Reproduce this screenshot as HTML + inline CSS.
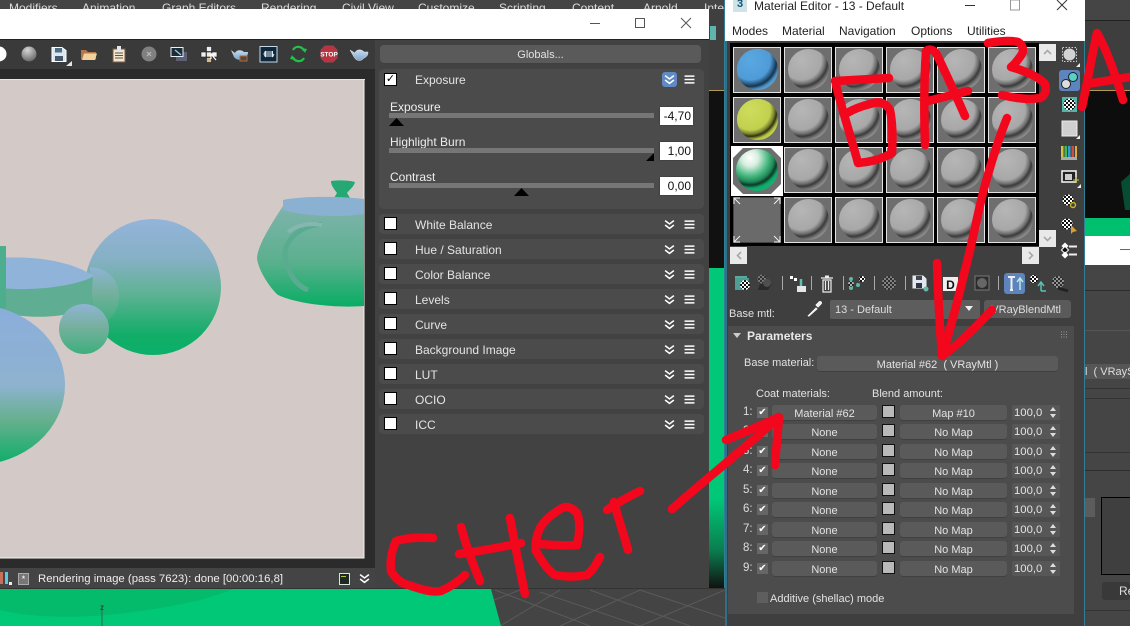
<!DOCTYPE html>
<html><head><meta charset="utf-8">
<style>
html,body{margin:0;padding:0;background:#444;}
#p{position:relative;width:1130px;height:626px;overflow:hidden;background:#444;font-family:"Liberation Sans",sans-serif;font-size:12px;color:#e6e6e6;}
#p div,#p span.a,#p svg.a{position:absolute;}
.t{white-space:nowrap;line-height:14px;}
.f{font-size:11px;}
.row{left:379px;width:325px;height:20px;background:#4b4b4b;border-radius:4px;}
.cb{left:384px;width:11px;height:11px;background:#fff;border:1px solid #000;}
.lb{left:415px;white-space:nowrap;line-height:14px;color:#e4e4e4;}
.tr{left:389px;width:265px;height:5px;background:#767676;}
.in{left:660px;width:33px;height:18px;background:#fff;color:#111;text-align:right;line-height:18px;box-shadow:0 0 1px #222;font-size:12px;padding-right:0;}
.in span{padding-right:2px;}
.s{width:46px;height:44px;background:#6e6e6e;border:1px solid #e4e4e4;overflow:hidden;}
.s:before{content:"";position:absolute;left:3px;top:1px;width:41px;height:41px;border-radius:50%;background:radial-gradient(circle 32px at 33% 27%,#b6b6b6 0,#a8a8a8 62%,#707070 74%,#3a3a3a 82%,#747474 92%,#929292 100%);}
.sb{width:17px;height:17px;background:#e9e9e9;}
.btn{background:#5a5a5a;border-radius:3px;color:#e2e2e2;text-align:center;height:15px;line-height:18px;box-shadow:0 1px 0 #404040;font-size:11px;white-space:nowrap;}
.n{left:743px;line-height:14px;color:#ddd;font-size:11.500px;}
.ck{left:757px;width:11px;height:11px;background:#666;color:#fff;font-size:10px;line-height:11px;text-align:center;}
.sw{left:882px;width:11px;height:11px;background:#b9b9b9;border:1px solid #111;}
.m1{left:772px;width:105px;}
.m2{left:900px;width:107px;}
.sp{left:1012px;width:48px;height:15px;background:#575757;border-radius:2px;line-height:16px;color:#e4e4e4;padding-left:2px;box-sizing:border-box;font-size:11.300px;}
.sp:after{content:"";position:absolute;right:4px;top:2px;width:0;height:0;border-left:3px solid transparent;border-right:3px solid transparent;border-bottom:4px solid #ddd;}
.sp:before{content:"";position:absolute;right:4px;bottom:2px;width:0;height:0;border-left:3px solid transparent;border-right:3px solid transparent;border-top:4px solid #ddd;}
</style></head><body><div id="p">

<svg width="0" height="0" style="position:absolute"><defs>
<symbol id="ch" viewBox="0 0 10 10"><path d="M1 1.500L5 4.500L9 1.500M1 5.500L5 8.500L9 5.500" fill="none" stroke="#fff" stroke-width="1.400"/></symbol>
<symbol id="hb" viewBox="0 0 11 10"><path d="M0 1.200H11M0 5H11M0 8.800H11" stroke="#fff" stroke-width="1.700"/></symbol>
</defs></svg>

<!-- top menu -->
<div style="left:0;top:0;width:725px;height:40px;background:#454545"></div>
<div class="t" style="left:9px;top:1px;color:#ddd">Modifiers</div>
<div class="t" style="left:82px;top:1px;color:#ddd">Animation</div>
<div class="t" style="left:162px;top:1px;color:#ddd">Graph Editors</div>
<div class="t" style="left:261px;top:1px;color:#ddd">Rendering</div>
<div class="t" style="left:342px;top:1px;color:#ddd">Civil View</div>
<div class="t" style="left:418px;top:1px;color:#ddd">Customize</div>
<div class="t" style="left:499px;top:1px;color:#ddd">Scripting</div>
<div class="t" style="left:572px;top:1px;color:#ddd">Content</div>
<div class="t" style="left:643px;top:1px;color:#ddd">Arnold</div>
<div class="t" style="left:704px;top:1px;color:#ddd">Inte</div>

<!-- right of frame buffer strip -->
<div style="left:709px;top:9px;width:16px;height:81px;background:#3f3f3f"></div>
<div style="left:710px;top:26px;width:6px;height:14px;background:#5fb5ad"></div>
<div style="left:709px;top:90px;width:16px;height:1px;background:#b59a55"></div>
<div style="left:709px;top:91px;width:16px;height:177px;background:#111"></div>
<div style="left:709px;top:268px;width:15px;height:320px;background:linear-gradient(#00c878 0,#00c878 72%,#0a7f50 88%,#111 100%)"></div>
<div style="left:724px;top:0;width:1px;height:626px;background:#2f7f97"></div>

<!-- VFB window -->
<div style="left:0;top:9px;width:709px;height:30px;background:#fff"></div>
<div style="left:0;top:39px;width:709px;height:1px;background:#222"></div>
<div style="left:0;top:40px;width:375px;height:29px;background:#3a3a3a"></div>
<div style="left:0;top:69px;width:375px;height:499px;background:#2b2b2b"></div>
<div style="left:375px;top:40px;width:334px;height:548px;background:#424242"></div>
<div style="left:0;top:568px;width:375px;height:20px;background:#444"></div>

<!-- window buttons -->
<svg class="a" style="left:580px;top:12px" width="125" height="22"><path d="M10 11.500H20" stroke="#555"/><rect x="55.500" y="6.500" width="9" height="9" fill="none" stroke="#555"/><path d="M101 6L111 16M111 6L101 16" stroke="#555"/></svg>

<!-- render image -->
<svg class="a" style="left:0;top:79px" width="365" height="480" viewBox="0 79 365 480">
<defs>
<linearGradient id="g1" x1="0" y1="0" x2="0" y2="1"><stop offset="0" stop-color="#93b4da"/><stop offset=".3" stop-color="#86b0c4"/><stop offset=".55" stop-color="#5eb294"/><stop offset=".85" stop-color="#12ad68"/><stop offset="1" stop-color="#0bb068"/></linearGradient>
<linearGradient id="g2" x1="0" y1="0" x2="0" y2="1"><stop offset="0" stop-color="#8fb4d4"/><stop offset=".45" stop-color="#76b09f"/><stop offset="1" stop-color="#3daf7c"/></linearGradient>
<linearGradient id="g3" x1="0" y1="0" x2="0" y2="1"><stop offset="0" stop-color="#8aaedb"/><stop offset=".5" stop-color="#8eb2cf"/><stop offset=".72" stop-color="#66b08e"/><stop offset="1" stop-color="#0aae68"/></linearGradient>
<linearGradient id="g4" x1="0" y1="0" x2="0" y2="1"><stop offset="0" stop-color="#7fb3ac"/><stop offset=".55" stop-color="#5bb08e"/><stop offset="1" stop-color="#08ad64"/></linearGradient>
</defs>
<rect x="0" y="79" width="364" height="479" fill="#d3cac8"/>
<path d="M364 79V558H0" fill="none" stroke="#f4f0ee" stroke-width="1"/>
<rect x="0" y="79" width="365" height="1" fill="#e9e4e2"/>
<circle cx="153" cy="287" r="68" fill="url(#g1)"/>
<path d="M90 267C108 268 119 280 119 296C119 310 112 318 105 323L93 310Z" fill="url(#g2)"/>
<path d="M0 258C40 256 70 262 93 276L91 306C70 318 30 320 0 312Z" fill="#5fae93"/>
<path d="M0 258C40 256 72 262 94 276C82 284 40 292 0 288Z" fill="#90b3da"/>
<rect x="0" y="246" width="6" height="62" fill="#4cae8c"/>
<circle cx="84" cy="329" r="25" fill="url(#g2)"/>
<ellipse cx="-25" cy="385" rx="90" ry="80" fill="url(#g3)"/>
<path d="M331 181C338 180 348 180 355 182C354 187 349 190 347 193L350 198H334L337 193C335 190 331 186 331 181Z" fill="#26a874"/>
<path d="M283 200C300 196 340 196 364 199V216C335 218 300 218 283 212Z" fill="#8ab0d2"/>
<path d="M283 206C270 226 258 245 257 258C258 270 270 288 278 295C300 305 340 308 364 306V214C335 218 305 216 283 210Z" fill="url(#g4)"/>
<path d="M322 224C302 226 288 236 285 252C285 270 295 285 308 290" fill="none" stroke="#5aac90" stroke-width="5"/>
<path d="M288 232C298 224 312 223 322 225" fill="none" stroke="#86b6b0" stroke-width="4"/>
</svg>

<!-- VFB toolbar icons -->
<svg class="a" style="left:0;top:40px" width="375" height="29" viewBox="0 40 375 29">
<defs>
<radialGradient id="gb" cx=".4" cy=".25" r=".9"><stop offset="0" stop-color="#d6d6d6"/><stop offset="1" stop-color="#555"/></radialGradient>
<linearGradient id="tp" x1="0" y1="0" x2="0" y2="1"><stop offset="0" stop-color="#c8dcee"/><stop offset="1" stop-color="#7ea4c8"/></linearGradient>
</defs>
<circle cx="-1" cy="54" r="7.500" fill="#fff"/>
<circle cx="29" cy="54" r="7.500" fill="url(#gb)"/>
<path d="M52 47.500H62L66 50.500V61.500H52Z" fill="#dbe7f0" stroke="#fff"/><rect x="55" y="48" width="7" height="4.500" fill="#4f6d83"/><rect x="55" y="56" width="8" height="5" fill="#46586a"/>
<path d="M72 61V66H66Z" fill="#e6e6e6"/>
<path d="M81 59.500V50H86L88 52H96V54L96 59.500Z" fill="#b5764a"/><path d="M82 60L84 53.500H97L95 60Z" fill="#f2d29c"/>
<rect x="113" y="49" width="12" height="13" fill="#f2e6cc" stroke="#7a5a48"/><rect x="117" y="46" width="4" height="5" fill="#dfe8ee"/><path d="M115 53H123M115 55.500H123M115 58H123" stroke="#555" stroke-width="1"/>
<circle cx="149" cy="54" r="7.500" fill="#808080"/><path d="M147 52L151 56M151 52L147 56" stroke="#bbb" stroke-width="1.200"/>
<rect x="176" y="52" width="11" height="9" fill="#5f6078"/><rect x="171" y="47.500" width="12" height="9" fill="#1d2b3a" stroke="#e9f1f6"/><path d="M175 50L181 55" stroke="#9cc" stroke-width="1.400"/>
<g fill="#eee" stroke="#222" stroke-width=".6"><rect x="206.500" y="46.500" width="5" height="5"/><rect x="201" y="52" width="5" height="5"/><rect x="206.500" y="52" width="5" height="5"/><rect x="212" y="52" width="5" height="5"/><rect x="206.500" y="57.500" width="5" height="5" fill="#d8b78a"/></g>
<path d="M211 54L216 60M211 54V59M211 54H216" stroke="#fff" fill="none" stroke-width="1.200"/>
<path d="M231 50L235 53C236 50 241 49 244 52L248 52C248 56 246 57 244 58C241 61 236 60 234 57Z" fill="url(#tp)"/><rect x="240" y="56" width="7" height="5" fill="#4b4b4b" stroke="#b06a3a"/>
<rect x="260" y="46.500" width="17" height="15.500" fill="#10283c" stroke="#c6d8e6"/><path d="M264 54L265.500 51V57ZM267 51V57M269 51V57M271 51V57M272.500 51V57L274 54" stroke="#dfeaf2" fill="none"/>
<path d="M293 50A6 6 0 0 1 304 51M304 58A6 6 0 0 1 293 57" fill="none" stroke="#21c24a" stroke-width="2.200"/><path d="M302 48L305 53L307 49ZM295 60L292 55L290 59Z" fill="#21c24a"/>
<path d="M325 46H333L337 50V58L333 62H325L321 58V50Z" fill="#b9343f" stroke="#a04050"/>
<text x="329" y="56.500" font-size="6.500" font-weight="bold" fill="#fff" text-anchor="middle" font-family="Liberation Sans">STOP</text>
<path d="M350 50L355 53C356 49 362 49 364 52L368 52C368 56 366 57 364 58C361 62 356 61 354 57Z" fill="url(#tp)" stroke="#dfeaf4" stroke-width=".5"/>
</svg>

<!-- Right panel of VFB -->
<div class="btn" style="left:380px;top:45px;width:321px;height:18px;line-height:21px;border-radius:4px;background:#5a5a5a">Globals...</div>
<div style="left:379px;top:69px;width:325px;height:140px;background:#4b4b4b;border-radius:5px"></div>
<div class="cb" style="top:73px;font-size:11px;line-height:11px;color:#000;text-align:center">✓</div>
<div class="lb" style="top:73px">Exposure</div>
<div style="left:662px;top:72px;width:15px;height:15px;background:#5f8ac4;border-radius:3px"></div>
<svg class="a" style="left:664px;top:74px" width="11" height="11"><use href="#ch"/></svg>
<svg class="a" style="left:684px;top:75px" width="11" height="9"><use href="#hb"/></svg>

<div class="t" style="left:390px;top:100px;color:#eee">Exposure</div>
<div class="tr" style="top:113px"></div>
<svg class="a" style="left:389px;top:118px" width="16" height="8"><path d="M0 8L7.500 0L15 8Z" fill="#000"/></svg>
<div class="in" style="top:107px"><span>-4,70</span></div>
<div class="t" style="left:390px;top:135px;color:#eee">Highlight Burn</div>
<div class="tr" style="top:148px"></div>
<svg class="a" style="left:646px;top:153px" width="8" height="8"><path d="M0 8L8 0V8Z" fill="#000"/></svg>
<div class="in" style="top:142px"><span>1,00</span></div>
<div class="t" style="left:390px;top:170px;color:#eee">Contrast</div>
<div class="tr" style="top:183px"></div>
<svg class="a" style="left:514px;top:188px" width="16" height="8"><path d="M0 8L7.500 0L15 8Z" fill="#000"/></svg>
<div class="in" style="top:177px"><span>0,00</span></div>

<div class="row" style="top:214px"></div><div class="cb" style="top:217px"></div><div class="lb" style="top:218px">White Balance</div>
<div class="row" style="top:239px"></div><div class="cb" style="top:242px"></div><div class="lb" style="top:243px">Hue / Saturation</div>
<div class="row" style="top:264px"></div><div class="cb" style="top:267px"></div><div class="lb" style="top:268px">Color Balance</div>
<div class="row" style="top:289px"></div><div class="cb" style="top:292px"></div><div class="lb" style="top:293px">Levels</div>
<div class="row" style="top:314px"></div><div class="cb" style="top:317px"></div><div class="lb" style="top:318px">Curve</div>
<div class="row" style="top:339px"></div><div class="cb" style="top:342px"></div><div class="lb" style="top:343px">Background Image</div>
<div class="row" style="top:364px"></div><div class="cb" style="top:367px"></div><div class="lb" style="top:368px">LUT</div>
<div class="row" style="top:389px"></div><div class="cb" style="top:392px"></div><div class="lb" style="top:393px">OCIO</div>
<div class="row" style="top:414px"></div><div class="cb" style="top:417px"></div><div class="lb" style="top:418px">ICC</div>
<svg class="a" style="left:664px;top:219px" width="11" height="215">
<use href="#ch" width="11" height="11" y="0"/><use href="#ch" width="11" height="11" y="25"/><use href="#ch" width="11" height="11" y="50"/><use href="#ch" width="11" height="11" y="75"/><use href="#ch" width="11" height="11" y="100"/><use href="#ch" width="11" height="11" y="125"/><use href="#ch" width="11" height="11" y="150"/><use href="#ch" width="11" height="11" y="175"/><use href="#ch" width="11" height="11" y="200"/></svg>
<svg class="a" style="left:684px;top:220px" width="11" height="212">
<use href="#hb" width="11" height="9" y="0"/><use href="#hb" width="11" height="9" y="25"/><use href="#hb" width="11" height="9" y="50"/><use href="#hb" width="11" height="9" y="75"/><use href="#hb" width="11" height="9" y="100"/><use href="#hb" width="11" height="9" y="125"/><use href="#hb" width="11" height="9" y="150"/><use href="#hb" width="11" height="9" y="175"/><use href="#hb" width="11" height="9" y="200"/></svg>

<!-- status bar -->
<div style="left:0;top:572px;width:3px;height:12px;background:#c8705a"></div>
<div style="left:5px;top:572px;width:3px;height:12px;background:#5cc8e0"></div>
<div style="left:9px;top:582px;width:3px;height:3px;background:#eee"></div>
<div style="left:18px;top:573px;width:9px;height:10px;background:#777;border:1px solid #aaa;color:#fff;font-size:9px;line-height:10px;text-align:center">*</div>
<div class="t" style="left:38px;top:572px;color:#eee;font-size:11.400px">Rendering image (pass 7623): done [00:00:16,8]</div>
<div style="left:339px;top:573px;width:9px;height:10px;background:#1c2a20;border:1px solid #d8e8e0"></div>
<div style="left:341px;top:576px;width:5px;height:1px;background:#b6c33a"></div>
<svg class="a" style="left:359px;top:573px" width="11" height="11"><use href="#ch"/></svg>

<!-- bottom viewport -->
<svg class="a" style="left:0;top:588px" width="725" height="38" viewBox="0 588 725 38">
<rect x="0" y="588" width="725" height="38" fill="#444"/>
<g stroke="#5a5a5a" stroke-width="1" fill="none"><path d="M495 590L590 626M540 592L640 626M590 590L690 626M640 590L725 618M500 626L560 590M560 626L640 590M640 626L725 590M494 600L520 590"/></g>
<path d="M0 589H491L501 626H0Z" fill="#00c877"/>
<path d="M0 610C60 625 150 612 200 600C215 596 225 592 235 589H0Z" fill="#04bb6c"/>
<path d="M102 606V626" stroke="#2a6a55"/>
<text x="100" y="610" font-size="8" fill="#333" font-family="Liberation Sans">z</text>
<rect x="0" y="588" width="725" height="1" fill="#333"/>
</svg>

<!-- Far right app -->
<div style="left:1085px;top:0;width:45px;height:626px;background:#454545"></div>
<div style="left:1085px;top:20px;width:45px;height:1px;background:#222"></div>
<div style="left:1085px;top:21px;width:45px;height:69px;background:#3e3e3e"></div>
<div style="left:1085px;top:90px;width:45px;height:1px;background:#b59a55"></div>
<div style="left:1085px;top:91px;width:45px;height:127px;background:#0d0d0d"></div>
<svg class="a" style="left:1085px;top:170px" width="45" height="50"><path d="M36 12L45 4V40H40Z" fill="#064d33"/></svg>
<div style="left:1085px;top:218px;width:45px;height:18px;background:#00c070"></div>
<div style="left:1085px;top:236px;width:45px;height:29px;background:#fff"></div>
<div style="left:1120px;top:249px;width:10px;height:1px;background:#666"></div>
<div style="left:1085px;top:290px;width:45px;height:1px;background:#2c2c2c"></div>
<div style="left:1085px;top:330px;width:45px;height:1px;background:#555"></div>
<div style="left:1085px;top:364px;width:45px;height:15px;background:#565656"></div>
<div class="t f" style="left:1085px;top:365px;width:45px;overflow:hidden;color:#ddd">l&nbsp; ( VRayS</div>
<div style="left:1085px;top:388px;width:45px;height:1px;background:#333"></div>
<div style="left:1085px;top:398px;width:45px;height:1px;background:#333"></div>
<div style="left:1085px;top:452px;width:45px;height:1px;background:#333"></div>
<div style="left:1085px;top:470px;width:45px;height:1px;background:#2c2c2c"></div>
<div style="left:1085px;top:498px;width:10px;height:19px;background:#5c5c5c"></div>
<div style="left:1101px;top:497px;width:29px;height:78px;background:#3f3f3f;border-left:1px solid #000;border-top:1px solid #000;border-bottom:1px solid #000;box-sizing:border-box"></div>
<div style="left:1102px;top:582px;width:28px;height:18px;background:#393939;border-radius:3px;line-height:19px;color:#ddd;padding-left:17px;box-sizing:border-box;overflow:hidden">Re</div>
<div style="left:1085px;top:610px;width:45px;height:1px;background:#333"></div>

<!-- Material Editor window -->
<div style="left:725px;top:0;width:360px;height:626px;background:#3f3f3f"></div>
<div style="left:725px;top:0;width:2px;height:626px;background:#2f6f88"></div>
<div style="left:1084px;top:0;width:1px;height:626px;background:#2f7f97"></div>
<div style="left:725px;top:0;width:360px;height:41px;background:#fff"></div>
<div style="left:733px;top:0;width:14px;height:12px;background:#cfe4e6;color:#157;font-weight:bold;font-size:11px;line-height:9px;text-align:center">3</div>
<div class="t" style="left:754px;top:-1px;color:#222">Material Editor - 13 - Default</div>
<svg class="a" style="left:960px;top:0" width="115" height="14"><path d="M5 5.500H15" stroke="#333"/><rect x="50.500" y="0" width="9" height="10" fill="none" stroke="#999"/><path d="M97 0L107 10M107 0L97 10" stroke="#333"/></svg>
<div class="t" style="left:732px;top:24px;color:#222">Modes</div>
<div class="t" style="left:782px;top:24px;color:#222">Material</div>
<div class="t" style="left:839px;top:24px;color:#222">Navigation</div>
<div class="t" style="left:911px;top:24px;color:#222">Options</div>
<div class="t" style="left:967px;top:24px;color:#222">Utilities</div>

<!-- slots -->
<div style="left:730px;top:43px;width:309px;height:203px;background:#000"></div>
<div class="s" style="left:733px;top:47px"></div><div class="s" style="left:784px;top:47px"></div><div class="s" style="left:835px;top:47px"></div><div class="s" style="left:886px;top:47px"></div><div class="s" style="left:937px;top:47px"></div><div class="s" style="left:988px;top:47px"></div>
<div class="s" style="left:733px;top:97px"></div><div class="s" style="left:784px;top:97px"></div><div class="s" style="left:835px;top:97px"></div><div class="s" style="left:886px;top:97px"></div><div class="s" style="left:937px;top:97px"></div><div class="s" style="left:988px;top:97px"></div>
<div class="s" style="left:784px;top:147px"></div><div class="s" style="left:835px;top:147px"></div><div class="s" style="left:886px;top:147px"></div><div class="s" style="left:937px;top:147px"></div><div class="s" style="left:988px;top:147px"></div>
<div class="s" style="left:784px;top:197px"></div><div class="s" style="left:835px;top:197px"></div><div class="s" style="left:886px;top:197px"></div><div class="s" style="left:937px;top:197px"></div><div class="s" style="left:988px;top:197px"></div>
<div style="left:737px;top:49px;width:41px;height:41px;border-radius:50%;background:radial-gradient(circle 32px at 33% 27%,#5aa8e2 0,#4f9bd8 62%,#2c5f88 74%,#16344c 82%,#4c93c8 92%,#5aa0d0 100%)"></div>
<div style="left:737px;top:99px;width:41px;height:41px;border-radius:50%;background:radial-gradient(circle 32px at 33% 27%,#cedd5c 0,#c2d04e 62%,#7b8530 74%,#2e3212 82%,#b8c444 92%,#c6d24a 100%)"></div>
<svg class="a" style="left:731px;top:146px" width="52" height="50"><path d="M0 0H52V50H0Z" fill="#fff"/><path d="M12 2H40L50 12V38L40 48H12L2 38V12Z" fill="#6e6e6e"/>
<defs><radialGradient id="gs" gradientUnits="userSpaceOnUse" cx="19" cy="12" r="33"><stop offset="0" stop-color="#fff"/><stop offset=".25" stop-color="#d8eee0"/><stop offset=".55" stop-color="#48b880"/><stop offset=".72" stop-color="#1f8a58"/><stop offset=".82" stop-color="#0c3a28"/><stop offset=".92" stop-color="#10a868"/><stop offset="1" stop-color="#10b070"/></radialGradient></defs><circle cx="26" cy="24" r="21" fill="url(#gs)"/></svg>
<svg class="a" style="left:733px;top:197px" width="48" height="46"><rect x=".5" y=".5" width="47" height="45" fill="#6a6a6a" stroke="#444"/><path d="M1 7V1H7M41 1H47V7M1 39V45H7M47 39V45H41M1 1L7 7M47 1L41 7M1 45L7 39M47 45L41 39" fill="none" stroke="#eee"/></svg>

<div class="sb" style="left:1039px;top:44px"></div>
<div class="sb" style="left:1039px;top:230px"></div>
<div class="sb" style="left:730px;top:247px"></div>
<div class="sb" style="left:1022px;top:247px"></div>
<svg class="a" style="left:730px;top:44px" width="326" height="220" viewBox="730 44 326 220" fill="none" stroke="#a8a8a8" stroke-width="1.600">
<path d="M1044 54L1047.500 50.500L1051 54M1044 237L1047.500 240.500L1051 237M741 252L737.500 255.500L741 259M1029 252L1032.500 255.500L1029 259"/></svg>

<!-- right icon column -->
<svg class="a" style="left:1058px;top:42px" width="27" height="222" viewBox="1058 42 27 222">
<defs><pattern id="chk" width="4" height="4" patternUnits="userSpaceOnUse"><rect width="4" height="4" fill="#fff"/><rect width="2" height="2" fill="#111"/><rect x="2" y="2" width="2" height="2" fill="#111"/></pattern></defs>
<rect x="1062.500" y="47.500" width="14" height="14" fill="none" stroke="#ccc" stroke-dasharray="1.500 1.500"/><circle cx="1069.500" cy="54.500" r="6" fill="#d2d2d2"/><path d="M1080 63V67H1076Z" fill="#eee"/>
<rect x="1059" y="70" width="21" height="21" rx="3" fill="#5d84bd"/><circle cx="1073" cy="77" r="4.500" fill="#5bd0c0" stroke="#123"/><circle cx="1066" cy="84" r="4.500" fill="#ddd" stroke="#222"/>
<rect x="1062" y="97" width="15" height="15" fill="#55b4a8"/><circle cx="1069.500" cy="104.500" r="6" fill="url(#chk)"/>
<rect x="1062" y="121" width="15" height="15" fill="#d0d0d0" stroke="#eee"/><path d="M1080 135V139H1076Z" fill="#eee"/>
<rect x="1061" y="146" width="2.500" height="11" fill="#d8c040"/><rect x="1064.500" y="146" width="2.500" height="11" fill="#3fb850"/><rect x="1068" y="146" width="2.500" height="11" fill="#3a9ad0"/><rect x="1071.500" y="146" width="2.500" height="11" fill="#d04a40"/><rect x="1075" y="146" width="2" height="11" fill="#d8b040"/>
<rect x="1061" y="157" width="16" height="3" fill="#aaa"/>
<rect x="1062" y="171" width="14" height="11" fill="#222" stroke="#eee" stroke-width="1.600"/><rect x="1065" y="174" width="7" height="6" fill="#ccc"/><path d="M1073 180H1079M1076 177V183" stroke="#c8c840" stroke-width="1"/><path d="M1081 184V188H1077Z" fill="#eee"/>
<circle cx="1068" cy="200" r="5.500" fill="url(#chk)"/><circle cx="1073" cy="205" r="2.500" fill="none" stroke="#c8b820" stroke-width="1.400"/>
<circle cx="1067" cy="224" r="5.500" fill="url(#chk)"/><path d="M1071 225L1077 231L1073 232L1071 234Z" fill="#d8a030"/>
<path d="M1069 246.500H1077M1069 254.500H1077" stroke="#eee" stroke-width="2"/><rect x="1062.500" y="243.500" width="5" height="5" fill="#fff" transform="rotate(45 1065 246)"/><rect x="1062.500" y="247.500" width="5" height="5" fill="#111" stroke="#fff" transform="rotate(45 1065 250)"/><rect x="1062.500" y="252.500" width="5" height="5" fill="#fff" transform="rotate(45 1065 255)"/>
</svg>

<!-- toolbar row -->
<svg class="a" style="left:728px;top:270px" width="345" height="28" viewBox="728 270 345 28">
<rect x="735" y="276" width="12" height="3" fill="#5ba89e"/><path d="M735 278H749L747 290H735Z" fill="#4f9e96"/><circle cx="745" cy="285" r="5" fill="url(#chk)"/>
<g opacity=".7"><circle cx="762" cy="279" r="4.500" fill="url(#chk)" opacity=".45"/><path d="M760 284H772L768 290H758Z" fill="#222"/><circle cx="767" cy="283" r="4" fill="#555"/></g>
<path d="M782.500 276V290M811.500 276V290M843.500 276V290M874.500 276V290M905.500 276V290M998.500 276V290" stroke="#aaa"/>
<rect x="790" y="276" width="3" height="3" fill="#fff"/><rect x="794" y="278" width="3" height="3" fill="#fff"/><path d="M801 279V288" stroke="#5bc0b0" stroke-width="2.500"/><rect x="797" y="286" width="9" height="6" fill="#e6e6e6"/>
<path d="M821 278H833M823 280H831V292H823ZM825.500 281V290M828.500 281V290" fill="none" stroke="#eee" stroke-width="1.200"/><rect x="825" y="275.500" width="4" height="2" fill="#eee"/>
<g fill="#5bb8a6"><circle cx="851" cy="279" r="2"/><circle cx="858" cy="285" r="2"/><circle cx="851" cy="288" r="2"/></g><circle cx="862" cy="279" r="3" fill="url(#chk)"/><circle cx="851" cy="284" r="3" fill="url(#chk)" opacity=".6"/>
<circle cx="889" cy="283" r="7" fill="url(#chk)" opacity=".35"/>
<path d="M913 276H923L926 279V288H913Z" fill="#dfe8ee" stroke="#eee"/><rect x="916" y="276" width="6" height="4" fill="#445"/><rect x="916" y="283" width="6" height="5" fill="#334"/><circle cx="926" cy="289" r="2.500" fill="#68b8a8"/>
<rect x="943" y="277" width="15" height="14" fill="#eee"/><text x="950.500" y="289" font-size="12" font-weight="bold" text-anchor="middle" fill="#111" font-family="Liberation Sans">D</text>
<rect x="975" y="276" width="14" height="14" fill="#2c2c2c" stroke="#777"/><circle cx="982" cy="283" r="5" fill="#666"/>
<rect x="1004" y="273" width="21" height="21" rx="3" fill="#5d84bd"/><path d="M1008 277H1015M1011.500 277V290M1010 290H1013" stroke="#eee" stroke-width="2" fill="none"/><path d="M1020 290V279M1017 282L1020 278L1023 282" stroke="#b8e8e0" stroke-width="1.500" fill="none"/>
<circle cx="1034" cy="279" r="4" fill="url(#chk)"/><path d="M1041 291V283M1038 286L1041 282L1044 286M1041 291H1046" stroke="#5bc0b0" stroke-width="1.500" fill="none"/>
<circle cx="1058" cy="282" r="6" fill="url(#chk)" opacity=".45"/><path d="M1058 288L1068 291" stroke="#222" stroke-width="3"/>
</svg>

<!-- base mtl row -->
<div class="t f" style="left:729px;top:307px;color:#e2e2e2">Base mtl:</div>
<svg class="a" style="left:806px;top:300px" width="17" height="18"><path d="M1 16L10 7L12 9L3 17ZM9 5L13 1C15 0 17 2 16 4L12 8Z" fill="#eee" stroke="#333" stroke-width=".5"/></svg>
<div style="left:830px;top:300px;width:150px;height:19px;background:#5d5d5d;border-radius:2px"></div>
<div class="t f" style="left:835px;top:303px;color:#ddd">13 - Default</div>
<svg class="a" style="left:965px;top:306px" width="9" height="6"><path d="M0 0H8L4 5Z" fill="#eee"/></svg>
<div class="f" style="left:984px;top:300px;width:87px;height:18px;background:#5a5a5a;border-radius:3px;line-height:21px;text-align:right;padding-right:10px;box-sizing:border-box;color:#ddd;white-space:nowrap">VRayBlendMtl</div>

<!-- Parameters -->
<div style="left:728px;top:326px;width:346px;height:288px;background:#4c4c4c"></div>
<svg class="a" style="left:733px;top:332px" width="9" height="7"><path d="M0 1H8L4 6Z" fill="#ccc"/></svg>
<div class="t" style="left:747px;top:329px;font-weight:bold;color:#e8e8e8">Parameters</div>
<svg class="a" style="left:1061px;top:331px" width="7" height="7"><path d="M0 1H7M0 3.500H7M0 6H7" stroke="#999" stroke-dasharray="1 1.500"/></svg>
<div class="t f" style="left:744px;top:356px;color:#e2e2e2">Base material:</div>
<div class="btn" style="left:817px;top:356px;width:241px">Material #62&nbsp; ( VRayMtl )</div>
<div class="t f" style="left:756px;top:387px;color:#e2e2e2">Coat materials:</div>
<div class="t f" style="left:872px;top:387px;color:#e2e2e2">Blend amount:</div>

<div class="n" style="top:405px">1:</div><div class="ck" style="top:407px">✔</div><div class="btn m1" style="top:405px">Material #62</div><div class="sw" style="top:405px"></div><div class="btn m2" style="top:405px">Map #10</div><div class="sp" style="top:405px">100,0</div>
<div class="n" style="top:424px">2:</div><div class="ck" style="top:426px">✔</div><div class="btn m1" style="top:424px">None</div><div class="sw" style="top:424px"></div><div class="btn m2" style="top:424px">No Map</div><div class="sp" style="top:424px">100,0</div>
<div class="n" style="top:444px">3:</div><div class="ck" style="top:446px">✔</div><div class="btn m1" style="top:444px">None</div><div class="sw" style="top:444px"></div><div class="btn m2" style="top:444px">No Map</div><div class="sp" style="top:444px">100,0</div>
<div class="n" style="top:463px">4:</div><div class="ck" style="top:465px">✔</div><div class="btn m1" style="top:463px">None</div><div class="sw" style="top:463px"></div><div class="btn m2" style="top:463px">No Map</div><div class="sp" style="top:463px">100,0</div>
<div class="n" style="top:483px">5:</div><div class="ck" style="top:485px">✔</div><div class="btn m1" style="top:483px">None</div><div class="sw" style="top:483px"></div><div class="btn m2" style="top:483px">No Map</div><div class="sp" style="top:483px">100,0</div>
<div class="n" style="top:502px">6:</div><div class="ck" style="top:504px">✔</div><div class="btn m1" style="top:502px">None</div><div class="sw" style="top:502px"></div><div class="btn m2" style="top:502px">No Map</div><div class="sp" style="top:502px">100,0</div>
<div class="n" style="top:522px">7:</div><div class="ck" style="top:524px">✔</div><div class="btn m1" style="top:522px">None</div><div class="sw" style="top:522px"></div><div class="btn m2" style="top:522px">No Map</div><div class="sp" style="top:522px">100,0</div>
<div class="n" style="top:541px">8:</div><div class="ck" style="top:543px">✔</div><div class="btn m1" style="top:541px">None</div><div class="sw" style="top:541px"></div><div class="btn m2" style="top:541px">No Map</div><div class="sp" style="top:541px">100,0</div>
<div class="n" style="top:561px">9:</div><div class="ck" style="top:563px">✔</div><div class="btn m1" style="top:561px">None</div><div class="sw" style="top:561px"></div><div class="btn m2" style="top:561px">No Map</div><div class="sp" style="top:561px">100,0</div>
<div style="left:757px;top:592px;width:11px;height:11px;background:#5e5e5e"></div>
<div class="t f" style="left:770px;top:592px;color:#e2e2e2">Additive (shellac) mode</div>

<!-- red scribbles -->
<svg class="a" style="left:0;top:0" width="1130" height="626" fill="none" stroke="#f3071d" stroke-width="8.500" stroke-linecap="round" stroke-linejoin="round">
<path d="M835 81L889 78"/>
<path d="M836 85C842 110 852 140 858 163C870 162 882 159 892 153C893 135 892 120 890 110C885 102 878 101 870 104C862 106 854 109 847 113"/>
<path d="M925 145C924 115 924 80 926 51C930 48 935 50 938 57C948 78 958 100 965 116"/>
<path d="M928 101L968 91"/>
<path d="M988 43C1000 41 1010 40 1018 42C1023 45 1024 50 1022 54C1018 60 1014 65 1011 67C1025 71 1038 76 1045 84C1047 90 1045 96 1040 98C1028 100 1014 98 1002 95"/>
<path d="M1082 107C1088 80 1092 55 1097 33C1107 50 1117 80 1123 100"/>
<path d="M1087 84L1130 77"/>
<path d="M1007 118C1000 135 992 160 985 185C977 215 972 245 965 270C958 300 950 330 942 356"/>
<path d="M937 263C938 295 940 330 942 356C958 345 978 325 992 310"/>
<path d="M672 509C705 480 745 448 778 418"/>
<path d="M726 440C745 432 762 425 779 417C778 432 776 450 775 465"/>
<path d="M433 538C420 537 405 538 396 541C391 552 390 562 391 571C395 578 400 582 405 584C418 588 430 593 441 591C450 587 458 582 465 575"/>
<path d="M461 527C466 545 473 565 480 581"/>
<path d="M459 554C480 551 502 547 521 543"/>
<path d="M510 518C515 545 520 570 525 594"/>
<path d="M540 544C552 545 565 546 577 545C580 532 580 520 577 513C572 507 566 506 562 508C552 514 544 521 540 528C536 537 535 545 536 551C542 562 548 570 555 575C565 577 577 577 587 575C593 570 597 563 600 557"/>
<path d="M614 502C618 518 624 535 628 550"/>
<path d="M607 510C617 503 628 497 640 491"/>
</svg>
</div></body></html>
